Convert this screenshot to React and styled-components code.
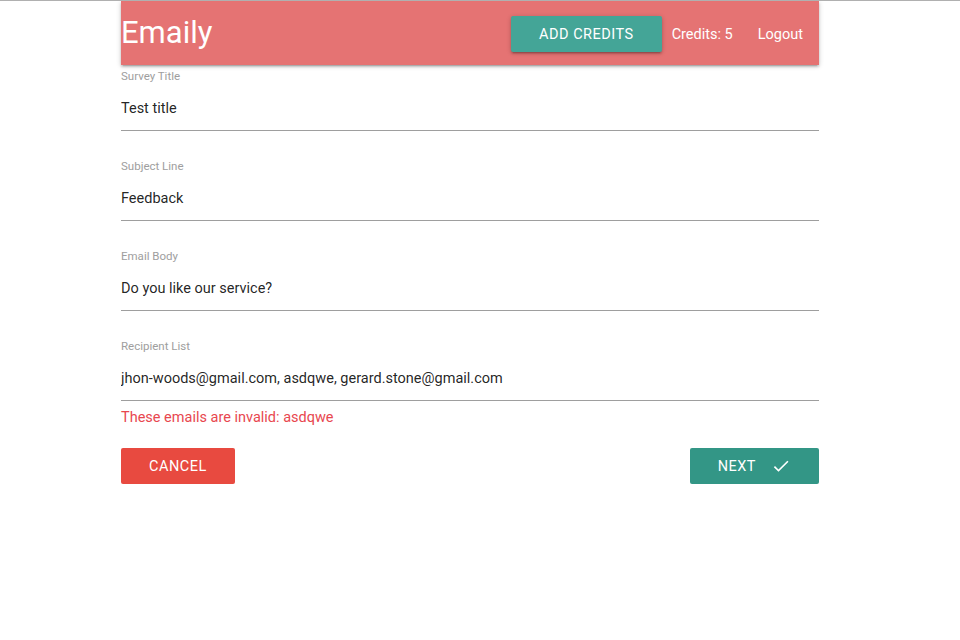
import React from 'react'
import styled, { createGlobalStyle } from 'styled-components'

const GlobalStyle = createGlobalStyle`
  html, body {
    margin: 0;
    padding: 0;
    background: #fff;
  }
  body {
    border-top: 1px solid #b0b0b0;
    font-family: Roboto, "Liberation Sans", sans-serif;
    color: rgba(0, 0, 0, 0.87);
  }
`;

const Container = styled.div`
  width: 698px;
  margin-left: 121px;
`;

const Nav = styled.nav`
  height: 64px;
  background-color: #e57373;
  display: flex;
  align-items: center;
  justify-content: space-between;
  box-shadow: 0 2px 2px 0 rgba(0,0,0,0.14), 0 3px 1px -2px rgba(0,0,0,0.12), 0 1px 5px 0 rgba(0,0,0,0.2);
`;

const Brand = styled.a`
  color: #fff;
  font-size: 31px;
  line-height: 66px;
  text-decoration: none;
`;

const Menu = styled.ul`
  display: flex;
  align-items: center;
  list-style: none;
  margin: 0;
  padding: 2px 0 0;
`;

const MenuItem = styled.li`
  color: #fff;
  font-size: 14.5px;
  margin: ${p => p.$gap ? '0 10px' : '0'};
  padding: ${p => p.$link ? '0 16px 0 15px' : '0'};
`;

const Button = styled.button`
  height: 36px;
  padding: 0 28px;
  border: none;
  border-radius: 2px;
  background-color: ${p => p.$color};
  color: #fff;
  font-family: Roboto, "Liberation Sans", sans-serif;
  font-size: 14.5px;
  letter-spacing: 0.5px;
  text-transform: uppercase;
  display: inline-flex;
  align-items: center;
  box-shadow: ${p => p.$raised ? '0 2px 2px 0 rgba(0,0,0,0.14), 0 3px 1px -2px rgba(0,0,0,0.12), 0 1px 5px 0 rgba(0,0,0,0.2)' : 'none'};
  cursor: pointer;
`;

const Form = styled.form`
  padding-top: 4px;
`;

const Field = styled.div`
  padding-bottom: ${p => p.$last ? '0' : '20px'};
`;

const Label = styled.label`
  display: block;
  font-size: 11.5px;
  line-height: 14px;
  color: #9e9e9e;
`;

const Input = styled.input`
  display: block;
  box-sizing: border-box;
  width: 100%;
  height: 48px;
  margin: 0 0 ${p => p.$tight ? '7px' : '8px'};
  padding: 4px 0 0;
  border: none;
  border-bottom: 1px solid #9e9e9e;
  outline: none;
  background: transparent;
  font-family: Roboto, "Liberation Sans", sans-serif;
  font-size: 14.5px;
  color: rgba(0, 0, 0, 0.87);
`;

const Error = styled.div`
  color: #e8474f;
  font-size: 14.5px;
  line-height: 20px;
  margin-bottom: 20px;
`;

const Actions = styled.div`
  display: flex;
  justify-content: space-between;
`;

const Check = styled.svg`
  width: 20px;
  height: 20px;
  margin-left: 15px;
  fill: #fff;
`;

const fields = [
  { label: 'Survey Title', value: 'Test title' },
  { label: 'Subject Line', value: 'Feedback' },
  { label: 'Email Body', value: 'Do you like our service?' },
  { label: 'Recipient List', value: 'jhon-woods@gmail.com, asdqwe, gerard.stone@gmail.com', error: 'These emails are invalid: asdqwe' },
];

const App = () => {
  return (
    <Container>
      <GlobalStyle />
      <Nav>
        <Brand href="#">Emaily</Brand>
        <Menu>
          <MenuItem>
            <Button type="button" $color="#44a597" $raised>Add Credits</Button>
          </MenuItem>
          <MenuItem $gap>Credits: 5</MenuItem>
          <MenuItem $link>Logout</MenuItem>
        </Menu>
      </Nav>
      <Form onSubmit={e => e.preventDefault()}>
        {fields.map((f) => (
          <Field key={f.label} $last={!!f.error}>
            <Label>{f.label}</Label>
            <Input defaultValue={f.value} $tight={!!f.error} />
            {f.error && <Error>{f.error}</Error>}
          </Field>
        ))}
        <Actions>
          <Button type="button" $color="#e84a40">Cancel</Button>
          <Button type="submit" $color="#339686">
            Next
            <Check viewBox="0 0 24 24">
              <path d="M9 16.2L4.8 12l-1.4 1.4L9 19 21 7l-1.4-1.4L9 16.2z" />
            </Check>
          </Button>
        </Actions>
      </Form>
    </Container>
  );
}

export default App
